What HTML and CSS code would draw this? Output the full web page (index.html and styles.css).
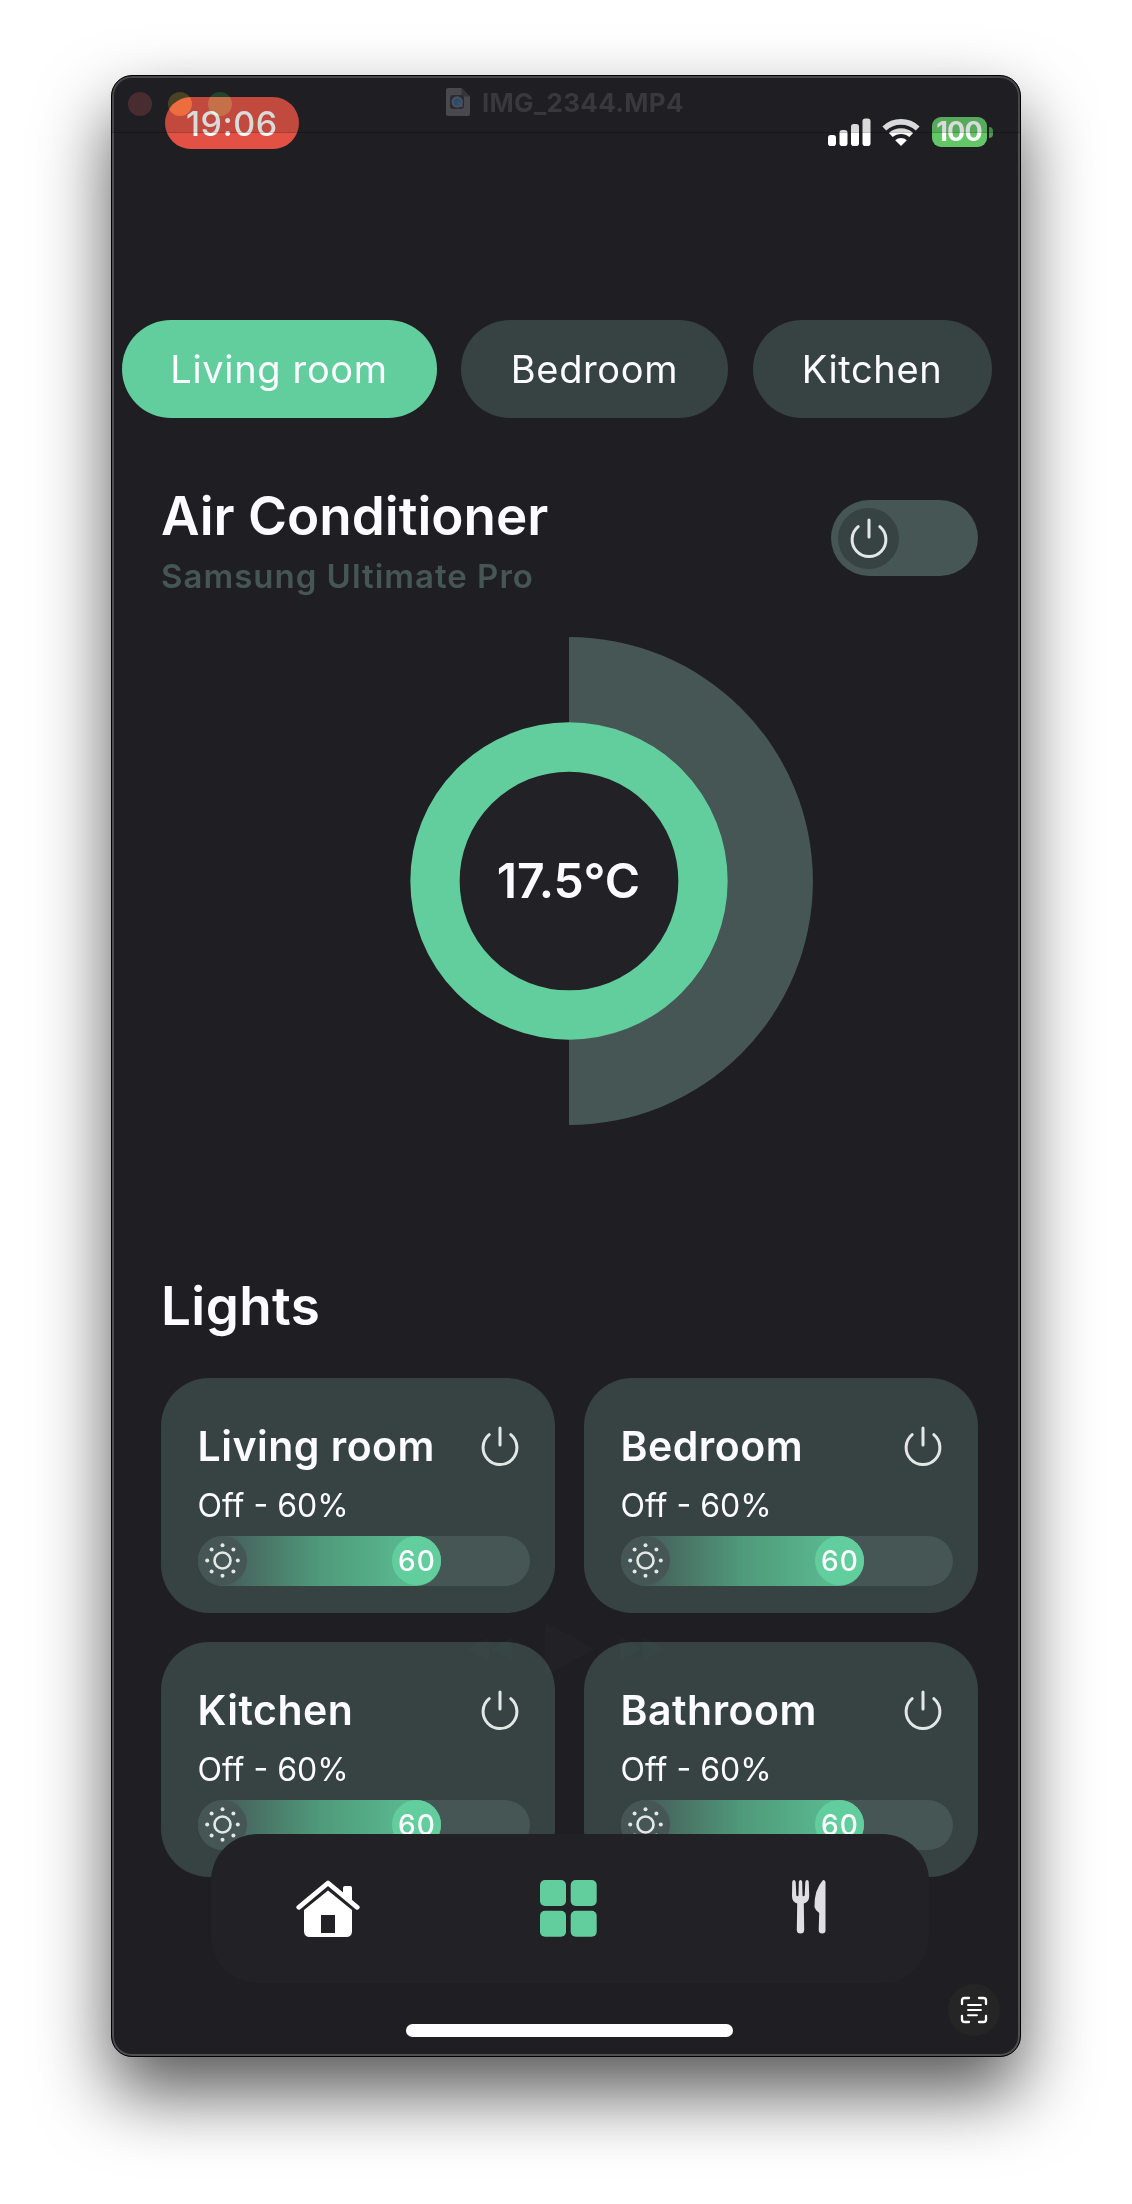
FILE: index.html
```html
<!DOCTYPE html>
<html lang="en">
<head>
<meta charset="utf-8">
<title>IMG_2344.MP4</title>
<link rel="stylesheet" href="styles.css">
</head>
<body>
<svg width="0" height="0" class="defs" aria-hidden="true">
  <symbol id="power" viewBox="0 0 42 42">
    <path d="M21 3v17M10.200 9.700a16.900 16.900 0 1 0 21.600 0" fill="none" stroke="#e3e8e7" stroke-width="3" stroke-linecap="round"/>
  </symbol>
  <symbol id="sun" viewBox="0 0 49 49">
    <g fill="#e3e8e7">
      <circle cx="24.500" cy="24.500" r="8" fill="none" stroke="#e3e8e7" stroke-width="2.600"/>
      <circle cx="24.500" cy="9.200" r="2"/><circle cx="24.500" cy="39.800" r="2"/>
      <circle cx="9.200" cy="24.500" r="2"/><circle cx="39.800" cy="24.500" r="2"/>
      <circle cx="13.600" cy="13.600" r="2"/><circle cx="35.400" cy="13.600" r="2"/>
      <circle cx="13.600" cy="35.400" r="2"/><circle cx="35.400" cy="35.400" r="2"/>
    </g>
  </symbol>
</svg>
<div class="window">
  <header class="status">
    <span class="clock">19:06</span>
    <div class="indicators">
      <svg width="43" height="30" viewBox="0 0 43 30" fill="#fff"><rect y="18" width="8" height="11" rx="2.800"/><rect x="11.500" y="13" width="8" height="16" rx="2.800"/><rect x="23" y="7" width="8" height="22" rx="2.800"/><rect x="34.500" y="1.500" width="8" height="27.500" rx="2.800"/></svg>
      <svg width="38" height="30" viewBox="0 0 38 30" fill="none" stroke="#fff" stroke-width="5.600"><path d="M2.300 11.500A24.300 24.300 0 0 1 35.700 11.500"/><path d="M8.800 18A15.300 15.300 0 0 1 29.200 18"/><path d="M19 29l-5.800-5.800a8.400 8.400 0 0 1 11.600 0z" fill="#fff" stroke="none"/></svg>
      <div class="battery"><span>100</span></div>
    </div>
  </header>

  <nav class="rooms">
    <button class="chip chip-active">Living room</button>
    <button class="chip chip-bedroom">Bedroom</button>
    <button class="chip chip-kitchen">Kitchen</button>
  </nav>

  <section class="device">
    <div>
      <h1>Air Conditioner</h1>
      <p class="model">Samsung Ultimate Pro</p>
    </div>
    <div class="toggle"><span class="knob"><svg width="42" height="42"><use href="#power"/></svg></span></div>
  </section>

  <section class="dial">
    <svg class="dial-rings" width="490" height="490" viewBox="-245 -245 490 490">
      <path d="M0-244A244 244 0 0 1 0 244z" fill="#455655"/>
      <circle r="134" fill="#222126" stroke="#62cd9d" stroke-width="49.300"/>
    </svg>
    <span class="temperature">17.5°C</span>
  </section>

  <section class="lights">
    <h2>Lights</h2>
    <div class="cards">
      <article class="card">
        <div class="card-head"><h3>Living room</h3><svg width="42" height="42"><use href="#power"/></svg></div>
        <p class="state">Off - 60%</p>
        <div class="slider"><div class="fill"><svg class="sun" width="49" height="49"><use href="#sun"/></svg><span class="level">60</span></div></div>
      </article>
      <article class="card">
        <div class="card-head"><h3>Bedroom</h3><svg width="42" height="42"><use href="#power"/></svg></div>
        <p class="state">Off - 60%</p>
        <div class="slider"><div class="fill"><svg class="sun" width="49" height="49"><use href="#sun"/></svg><span class="level">60</span></div></div>
      </article>
      <article class="card">
        <div class="card-head"><h3>Kitchen</h3><svg width="42" height="42"><use href="#power"/></svg></div>
        <p class="state">Off - 60%</p>
        <div class="slider"><div class="fill"><svg class="sun" width="49" height="49"><use href="#sun"/></svg><span class="level">60</span></div></div>
      </article>
      <article class="card">
        <div class="card-head"><h3>Bathroom</h3><svg width="42" height="42"><use href="#power"/></svg></div>
        <p class="state">Off - 60%</p>
        <div class="slider"><div class="fill"><svg class="sun" width="49" height="49"><use href="#sun"/></svg><span class="level">60</span></div></div>
      </article>
    </div>
  </section>

  <svg class="playback" width="200" height="54" viewBox="0 0 200 54" aria-hidden="true"><path d="M78 0l50 27-50 27zM0 27l22-12v24zM23 27l22-12v24zM153 15l22 12-22 12zM176 15l22 12-22 12z"/></svg>

  <nav class="tabbar">
    <svg width="64" height="58" viewBox="0 0 64 58">
      <path d="M49 6h5q2 0 2 2v16l-9-8V8q0-2 2-2z" fill="#fff"/>
      <path fill-rule="evenodd" d="M8 30L32 10.500 56 30v21q0 6-6 6H14q-6 0-6-6zM25 35v18h14V35z" fill="#fff"/>
      <path d="M2.800 27.300L32 3 61.200 27.300" fill="none" stroke="#fff" stroke-width="4.800" stroke-linejoin="round" stroke-linecap="round"/>
    </svg>
    <svg class="grid-icon" width="57" height="57" viewBox="0 0 57 57" fill="#62cd9d"><rect width="26" height="26" rx="5"/><rect x="30.700" width="26" height="26" rx="5"/><rect y="30.700" width="26" height="26" rx="5"/><rect x="30.700" y="30.700" width="26" height="26" rx="5"/></svg>
    <svg class="cutlery" width="34" height="54" viewBox="0 0 34 54" fill="#e0dfe3"><path d="M1.800 0Q3.500 0 3.700 2L4.300 15.500Q5.500 17 6.500 15.500L6.800 2Q7 0 8.500 0T10.200 2L10.500 15.500Q11.500 17 12.700 15.500L13.300 2Q13.500 0 15.200 0T16.800 2.500L17.200 16Q17.200 22 11.800 23.500L12.200 50Q12 53.500 8.500 53.500T4.800 50L5.200 23.500Q0 22 0 16L.2 2.500Q.2 0 1.800 0z"/><path d="M31 0Q33.500 0 33.500 2.500V50.500Q33.500 53.500 30.200 53.500T26.700 50L27.200 33Q23 30 22.500 27 22 10 31 0z"/></svg>
  </nav>

  <div class="home-indicator"></div>

  <div class="scan"><svg width="28" height="28" viewBox="0 0 28 28" fill="none" stroke="#fff" stroke-width="2.300" stroke-linecap="round"><path d="M2 8V4.500Q2 2 4.500 2H9M19 2h4.500Q26 2 26 4.500V8M26 20v3.500Q26 26 23.500 26H19M9 26H4.500Q2 26 2 23.500V20"/><path d="M8 9h13M8 14h13M8 19.300h9" stroke-width="1.900"/></svg></div>

  <div class="titlebar">
    <i class="light red"></i><i class="light yellow"></i><i class="light green"></i>
    <div class="filename">
      <svg width="24" height="28" viewBox="0 0 24 28"><path d="M2 0h13.500L24 8.500V26q0 2-2 2H2q-2 0-2-2V2q0-2 2-2z" fill="#49484d"/><path d="M15.500 0v8.500H24z" fill="#37363b"/><rect x="4" y="7" width="14" height="14" rx="3" fill="#2b2c33"/><circle cx="11.200" cy="14" r="4.600" fill="#2d4a70" stroke="#46525f" stroke-width="2.200"/><path d="M12 14l4.500 4.500" stroke="#46525f" stroke-width="2.200"/></svg>
      <span>IMG_2344.MP4</span>
    </div>
  </div>
</div>
</body>
</html>
```
FILE: styles.css
```css
* { box-sizing: border-box; margin: 0; padding: 0; }
body {
  width: 1132px; height: 2204px; overflow: hidden;
  padding: 75px 111px 0; background: #fff;
  font-family: Inter, "Liberation Sans", sans-serif; color: #fcfbff;
}
svg { display: block; flex: none; }
.defs { position: absolute; }

.window {
  position: relative; width: 910px; height: 1982px;
  border: 1px solid #000; border-radius: 21px; background: #1f1e23;
  box-shadow: inset 0 0 0 2px #4f4f51, 0 36px 72px rgba(0,0,0,.66);
}

/* phone status bar */
.status { display: flex; justify-content: space-between; align-items: flex-start; height: 244px; padding: 21px 33.500px 0 53px; }
.clock {
  width: 133.500px; height: 52px; border-radius: 26px; background: #e25144;
  font-size: 34px; line-height: 53px; font-weight: 500; text-align: center; letter-spacing: .5px; color: #fff;
}
.indicators { display: flex; align-items: center; gap: 11.500px; margin-top: 19px; height: 32px; }
.battery {
  position: relative; width: 55px; height: 30px; border-radius: 9px; background: #63c667;
  font-size: 27px; line-height: 30px; font-weight: 700; text-align: center; letter-spacing: -.8px; color: #fff;
}
.battery::after { content: ""; position: absolute; right: -6px; top: 10px; width: 4px; height: 11px; border-radius: 0 4px 4px 0; background: #4a9a50; }

/* room chips */
.rooms { display: flex; gap: 24.500px; padding-left: 9.500px; }
.chip {
  height: 98px; border: 0; border-radius: 49px; background: #364342; color: #fcfbff;
  font: 400 38px/98px Inter, "Liberation Sans", sans-serif; letter-spacing: .65px; white-space: nowrap;
}
.chip-active { width: 315px; background: #62cd9d; }
.chip-bedroom { width: 267px; }
.chip-kitchen { width: 239px; }

/* air conditioner */
.device { display: flex; justify-content: space-between; padding: 66px 42.500px 0 49px; height: 219px; }
h1, h2 { font-size: 53px; line-height: 64px; font-weight: 600; }
h2 { letter-spacing: .4px; }
.model { margin-top: 8px; font-size: 33px; line-height: 40px; font-weight: 600; letter-spacing: 1px; color: #455655; }
.toggle { margin-top: 16px; width: 147px; height: 76px; padding: 7.500px; border-radius: 38px; background: #455655; }
.knob { display: flex; align-items: center; justify-content: center; width: 61px; height: 61px; border-radius: 50%; background: #364342; }
.dial { display: grid; place-items: center; height: 490px; margin-top: -1px; padding-left: 5px; }
.dial > * { grid-area: 1 / 1; }
.temperature { font-size: 48px; line-height: 58px; font-weight: 600; }

/* lights */
.lights { padding: 148px 0 0 49px; }
.cards { display: grid; grid-template-columns: 393.500px 393.500px; gap: 29.500px; margin-top: 40px; }
.card { height: 234.500px; padding: 43px 24px 0 36.500px; border-radius: 48px; background: #364342; }
.card-head { display: flex; justify-content: space-between; align-items: center; height: 50px; padding-right: 10px; }
h3 { font-size: 41px; line-height: 50px; font-weight: 600; letter-spacing: .5px; white-space: nowrap; }
.state { margin-top: 16px; font-size: 32px; line-height: 38px; }
.slider { margin-top: 11px; width: 332.500px; height: 49.500px; border-radius: 25px; background: #455655; }
.fill {
  display: flex; justify-content: space-between; align-items: center; width: 243.500px; height: 49.500px;
  border-radius: 25px; background: linear-gradient(90deg, #455655 6%, #4f9a7b 50%, #5dc496);
}
.sun { border-radius: 50%; background: #455655; }
.level { width: 49px; height: 49px; padding-left: 1px; border-radius: 50%; background: #62cd9d; text-align: center; font-size: 28px; line-height: 51px; font-weight: 500; letter-spacing: 1.200px; }

/* floating chrome above the scrolled content */
.playback { position: absolute; left: 355px; top: 1546px; fill: rgba(90,140,120,.04); }
.tabbar {
  position: absolute; left: 99px; top: 1758px; width: 717.500px; height: 149px; border-radius: 47px; background: #222126;
  display: flex; align-items: flex-start; padding: 46px 0 0 85px;
}
.grid-icon { margin-left: 180px; }
.cutlery { margin-left: 195px; }
.home-indicator { position: absolute; left: 294px; top: 1948px; width: 327px; height: 13px; border-radius: 7px; background: #fff; }
.scan { position: absolute; left: 835.500px; top: 1908px; width: 52px; height: 52px; border-radius: 50%; background: #252525; display: flex; align-items: center; justify-content: center; }
.titlebar { position: absolute; inset: 0 0 auto; height: 57px; border-bottom: 1px solid rgba(0,0,0,.25); border-radius: 20px 20px 0 0; background: rgba(31,33,36,.17); background-clip: padding-box; display: flex; gap: 16px; padding: 16px 0 0 16px; }
.light { width: 24px; height: 24px; border-radius: 50%; mix-blend-mode: plus-lighter; }
.red { background: #2b0e0c; }
.yellow { background: #2c2401; }
.green { background: #05270c; }
.filename { display: flex; gap: 12px; margin: -4px 0 0 198px; height: 28px; font-size: 26px; line-height: 30px; font-weight: 700; letter-spacing: .3px; color: #39383d; }
```
